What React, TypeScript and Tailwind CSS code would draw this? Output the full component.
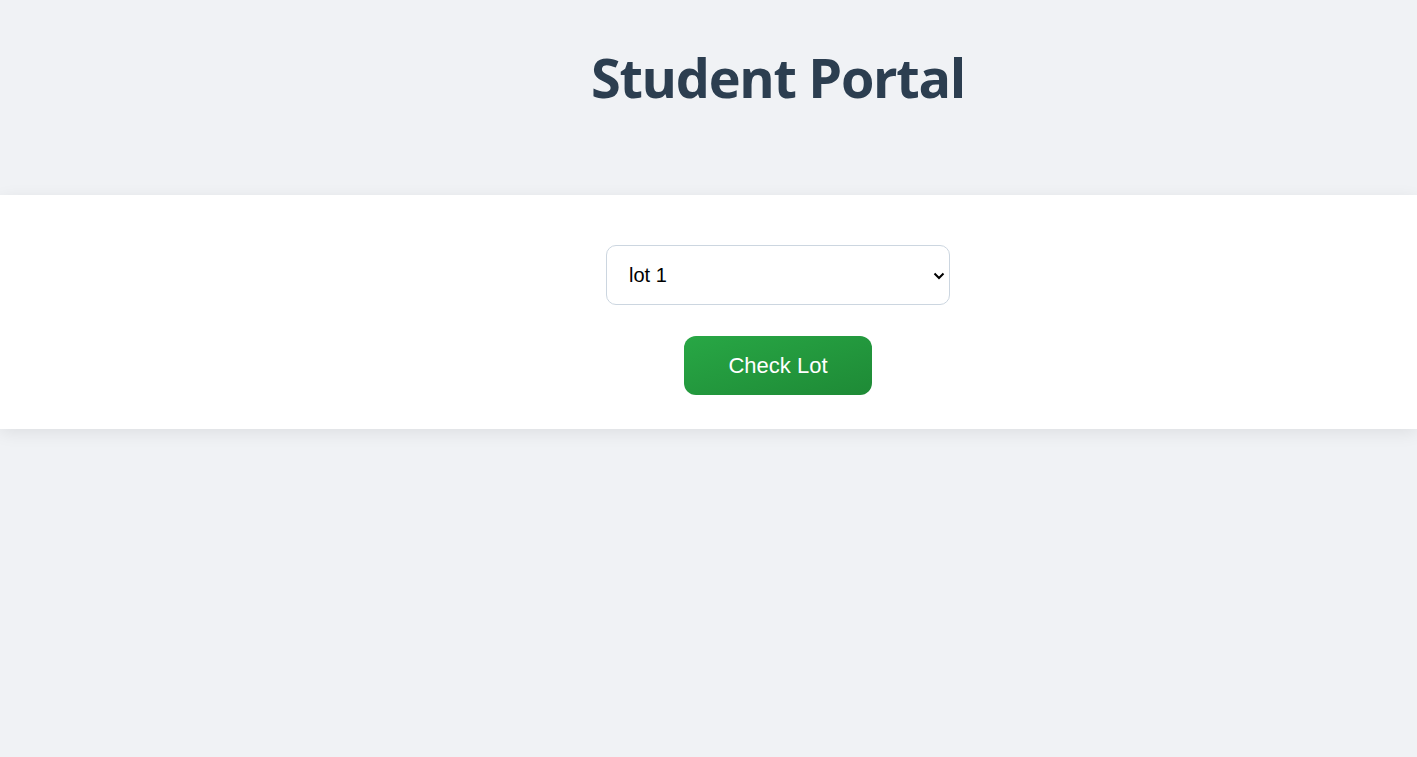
import React from "react";

export default function App() {
  return (
    <div className="min-h-[757px] w-full bg-[#f0f2f5]">
      <div className="flex justify-center pl-[139px] pt-[43px] h-[195px]">
        <h1
          className="text-[54px] font-bold leading-[68px] text-[#2c3e50] tracking-[-1.3px]"
          style={{ fontFamily: '"Open Sans", "Noto Sans", sans-serif' }}
        >
          Student Portal
        </h1>
      </div>
      <div className="bg-white h-[234px] shadow-[0_4px_16px_rgba(0,0,0,0.08)] flex flex-col items-center pl-[139px] pt-[50px]">
        <div className="relative w-[344px] h-[60px]">
          <select
            className="appearance-none w-full h-full rounded-[10px] border border-[#ccd6e0] bg-white pl-[22px] text-[20px] text-black outline-none"
            style={{ fontFamily: '"Liberation Sans", Arial, sans-serif', appearance: "none", WebkitAppearance: "none" }}
            defaultValue="lot 1"
          >
            <option>lot 1</option>
            <option>lot 2</option>
            <option>lot 3</option>
          </select>
          <svg
            className="absolute right-[5px] top-[27px] pointer-events-none"
            width="12"
            height="8"
            viewBox="0 0 12 8"
          >
            <path d="M1.5 1.5 L6 6 L10.5 1.5" fill="none" stroke="#000" strokeWidth="2" />
          </svg>
        </div>
        <button
          className="mt-[31px] w-[188px] h-[59px] rounded-[12px] bg-gradient-to-br from-[#28a745] to-[#1e8a36] text-white text-[22px]"
          style={{ fontFamily: '"Liberation Sans", Arial, sans-serif' }}
        >
          Check Lot
        </button>
      </div>
    </div>
  );
}
